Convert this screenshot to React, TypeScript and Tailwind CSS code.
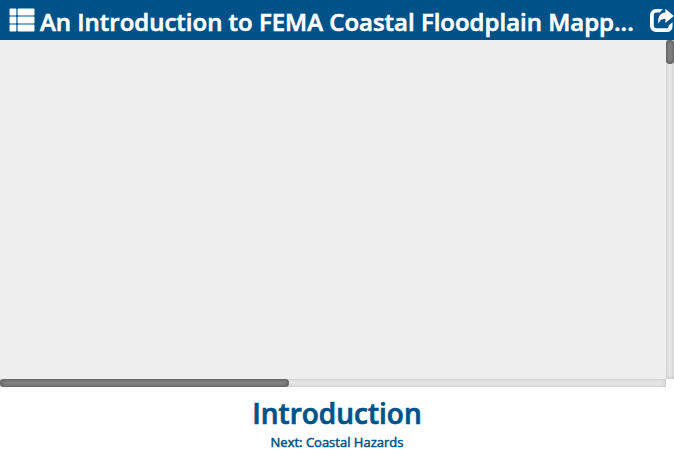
import React from "react";

function ListIcon() {
  return (
    <svg viewBox="0 0 26 24" className="ml-[9px] h-6 w-[26px] shrink-0" fill="currentColor">
      <rect x="0.5" y="0.6" width="6.9" height="6.9" rx="0.8" />
      <rect x="8.6" y="0.6" width="16.9" height="6.9" rx="0.8" />
      <rect x="0.5" y="8.6" width="6.9" height="6.9" rx="0.8" />
      <rect x="8.6" y="8.6" width="16.9" height="6.9" rx="0.8" />
      <rect x="0.5" y="16.6" width="6.9" height="6.9" rx="0.8" />
      <rect x="8.6" y="16.6" width="16.9" height="6.9" rx="0.8" />
    </svg>
  );
}

function ShareIcon() {
  return (
    <svg viewBox="0 0 26 24" className="h-6 w-[26px] shrink-0" fill="currentColor">
      <path d="M14 1H7A6 6 0 0 0 1 7v11a6 6 0 0 0 6 6h11a5.5 5.5 0 0 0 5.5-5.5v-4.2l-3.8 3.1v.3a2.6 2.6 0 0 1-2.6 2.6H7.5a2.7 2.7 0 0 1-2.7-2.7V7.3a2.7 2.7 0 0 1 2.7-2.7h3.2z" />
      <path d="M16.4.8L24.8 7.9l-8.4 7v-3.8c-4 0-5.7 1.3-7 5C8.4 9.5 10.8 4.9 16.4 4.6z" />
    </svg>
  );
}

export default function App() {
  return (
    <div className="flex h-[457px] w-[674px] flex-col overflow-hidden bg-white font-['Open_Sans',sans-serif] text-[#005288]">
      <header className="flex h-10 shrink-0 items-center overflow-hidden bg-[#005288] text-white">
        <ListIcon />
        <h1 className="ml-[5px] mt-[3px] w-[609px] shrink-0 whitespace-nowrap text-[23.97px] leading-none font-semibold [-webkit-text-stroke:0.6px_currentColor]">
          An Introduction to FEMA Coastal Floodplain Mapp...
        </h1>
        <ShareIcon />
      </header>
      <main className="grid h-[347px] shrink-0 grid-cols-[666px_8px] grid-rows-[339px_8px]">
        <div className="bg-[#eee]" />
        <div className="bg-[#e8e8e8] shadow-[inset_0_0_4px_rgba(0,0,0,0.2)]">
          <div className="h-6 rounded bg-[#858585] shadow-[inset_0_0_4px_rgba(0,0,0,0.5)]" />
        </div>
        <div className="bg-[#e8e8e8] shadow-[inset_0_0_4px_rgba(0,0,0,0.2)]">
          <div className="h-2 w-[289px] rounded bg-[#858585] shadow-[inset_0_0_4px_rgba(0,0,0,0.5)]" />
        </div>
      </main>
      <footer className="text-center">
        <h2 className="mt-2 text-[28px] leading-9 font-semibold [-webkit-text-stroke:0.7px_currentColor]">Introduction</h2>
        <p className="mt-[3px] text-[13px] leading-4 font-normal [-webkit-text-stroke:0.5px_currentColor]">Next: Coastal Hazards</p>
      </footer>
    </div>
  );
}
